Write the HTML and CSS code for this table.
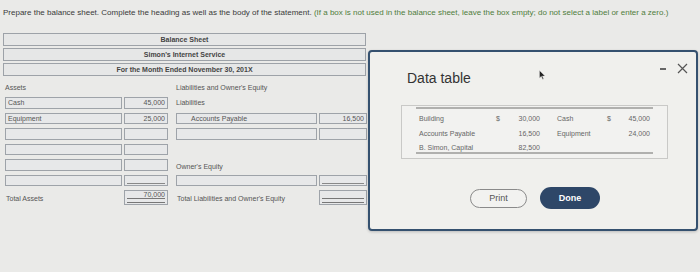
FILE: index.html
```html
<!DOCTYPE html>
<html>
<head>
<meta charset="utf-8">
<link rel="stylesheet" href="styles.css">
</head>
<body>
<div class="page">
  <p class="instructions">Prepare the balance sheet. Complete the heading as well as the body of the statement. <span class="hint">(If a box is not used in the balance sheet, leave the box empty; do not select a label or enter a zero.)</span></p>
  <div class="heading">
    <div class="hbox">Balance Sheet</div>
    <div class="hbox">Simon's Internet Service</div>
    <div class="hbox">For the Month Ended November 30, 201X</div>
  </div>
  <div class="sheet">
    <div class="lbl c1">Assets</div>
    <div class="lbl c3">Liabilities and Owner's Equity</div>

    <div class="box c1">Cash</div>
    <div class="box num c2">45,000</div>
    <div class="lbl c3">Liabilities</div>

    <div class="box c1">Equipment</div>
    <div class="box num c2">25,000</div>
    <div class="box c3 indent">Accounts Payable</div>
    <div class="box num c4">16,500</div>

    <div class="box c1"></div>
    <div class="box num c2"></div>
    <div class="box c3"></div>
    <div class="box num c4"></div>

    <div class="box c1"></div>
    <div class="box num c2"></div>

    <div class="box c1"></div>
    <div class="box num c2"></div>
    <div class="lbl c3 low">Owner's Equity</div>

    <div class="box c1"></div>
    <div class="box num c2 single"></div>
    <div class="box c3"></div>
    <div class="box num c4 single"></div>

    <div class="lbl c1 total">Total Assets</div>
    <div class="box num c2 double">70,000</div>
    <div class="lbl c3 total">Total Liabilities and Owner's Equity</div>
    <div class="box num c4 double"></div>
  </div>
</div>

<div class="dialog">
  <div class="dlg-head">
    <h2 class="dlg-title">Data table</h2>
    <div class="dlg-controls">
      <span class="minus"></span>
      <svg class="close" width="11" height="11" viewBox="0 0 11 11"><path d="M1 1 L10 10 M10 1 L1 10" stroke="#555" stroke-width="1.2" fill="none"/></svg>
    </div>
  </div>
  <div class="dtable">
    <div class="dinner">
      <span class="dl">Building</span><span class="dd">$</span><span class="dv">30,000</span><span class="dl2">Cash</span><span class="dd">$</span><span class="dv">45,000</span>
      <span class="dl">Accounts Payable</span><span class="dd"></span><span class="dv">16,500</span><span class="dl2">Equipment</span><span class="dd"></span><span class="dv">24,000</span>
      <span class="dl">B. Simon, Capital</span><span class="dd"></span><span class="dv">82,500</span><span class="dl2"></span><span class="dd"></span><span class="dv"></span>
    </div>
  </div>
  <div class="buttons">
    <button class="btn print">Print</button>
    <button class="btn done">Done</button>
  </div>
</div>

<svg class="cursor" width="7" height="10" viewBox="0 0 7 10"><path d="M0.5 0.5 L0.5 8 L2.3 6.3 L3.6 9.3 L4.6 8.9 L3.4 6 L6 6 Z" fill="#222" stroke="#ddd" stroke-width="0.4"/></svg>
</body>
</html>
```

FILE: styles.css
```css
* { box-sizing: border-box; }
html, body { margin: 0; padding: 0; }
body {
  width: 700px;
  height: 272px;
  background: #eaeae8;
  font-family: "Liberation Sans", Arial, sans-serif;
  color: #444;
  position: relative;
  overflow: hidden;
}
.page { padding: 8px 3px 0 3px; }
.instructions {
  margin: 0;
  font-size: 8px;
  line-height: 9px;
  color: #3a3a3a;
  white-space: nowrap;
}
.hint { color: #4f7d3c; }
.heading {
  margin-top: 16px;
  width: 363px;
  display: flex;
  flex-direction: column;
  gap: 2px;
}
.hbox {
  height: 13px;
  border: 1px solid #9da2a8;
  background: #e6e7e7;
  font-size: 7px;
  font-weight: bold;
  color: #444;
  text-align: center;
  line-height: 11px;
}
.sheet {
  margin: 6px 0 0 2px;
  display: grid;
  grid-template-columns: 117px 44px 147px 48px;
  column-gap: 2px;
  grid-template-rows: 11px repeat(6, 11.5px) 15px;
  row-gap: 4px;
  font-size: 7px;
  color: #555;
}
.sheet > .c3 { margin-left: 6px; }
.c1 { grid-column: 1; }
.c2 { grid-column: 2; }
.c3 { grid-column: 3; }
.c4 { grid-column: 4; }
.lbl { line-height: 11px; white-space: nowrap; }
.lbl.low { align-self: end; line-height: 9px; }
.lbl.total { line-height: 17px; padding-left: 1px; }
.box {
  border: 1px solid #9ea3a9;
  background: #e7e8e9;
  line-height: 9.5px;
  padding: 0 2px;
  white-space: nowrap;
  position: relative;
}
.box.num { text-align: right; }
.box.indent { padding-left: 14px; }
.box.single::after {
  content: "";
  position: absolute;
  left: 2px; right: 2px; bottom: 1.5px;
  border-bottom: 1px solid #888;
}
.box.double { line-height: 7.5px; }
.box.double::after {
  content: "";
  position: absolute;
  left: 2px; right: 2px; bottom: 1.5px;
  height: 3px;
  border-top: 1px solid #777;
  border-bottom: 1px solid #777;
}

.dialog {
  position: absolute;
  left: 368px;
  top: 50px;
  width: 330px;
  height: 181px;
  border: 2px solid #35516f;
  border-radius: 4px;
  background: #f0f0ed;
  box-shadow: 0 1px 3px rgba(0,0,0,0.2);
  padding: 0 0 0 31px;
}
.dlg-head {
  display: flex;
  justify-content: space-between;
  align-items: flex-start;
  height: 53px;
}
.dlg-title {
  margin: 18px 0 0 6px;
  font-size: 14px;
  font-weight: normal;
  color: #333;
}
.dlg-controls {
  display: flex;
  align-items: center;
  gap: 11px;
  margin: 11px 8px 0 0;
}
.minus {
  width: 6px;
  height: 2px;
  background: #666;
}
.dtable {
  width: 267px;
  height: 54px;
  border: 1px solid #c9c9c7;
  background: #f2f2f0;
  padding: 1px 14px 0 14px;
}
.dinner {
  border-top: 2px solid #b0b0ae;
  border-bottom: 2px solid #b0b0ae;
  display: grid;
  grid-template-columns: 77px 14px 30px 67px 14px 29px;
  grid-template-rows: 15px 15px 11px;
  padding: 1.5px 0 0 3px;
  font-size: 7px;
  color: #666;
  line-height: 15px;
  white-space: nowrap;
}
.dinner > span:nth-last-child(-n+6) { line-height: 13px; }
.dv { text-align: right; }
.dl2 { padding-left: 17px; }
.buttons {
  display: flex;
  gap: 13px;
  margin: 28px 0 0 69px;
  align-items: center;
}
.btn {
  font-family: "Liberation Sans", Arial, sans-serif;
  font-size: 9px;
  border-radius: 12px;
  cursor: pointer;
}
.print {
  width: 57px;
  height: 19px;
  border: 1px solid #8a8a8a;
  background: #f2f2f0;
  color: #555;
}
.done {
  width: 60px;
  height: 22px;
  border: none;
  background: #2e4768;
  color: #fff;
  font-weight: bold;
}
.cursor {
  position: absolute;
  left: 539px;
  top: 70px;
}
```
